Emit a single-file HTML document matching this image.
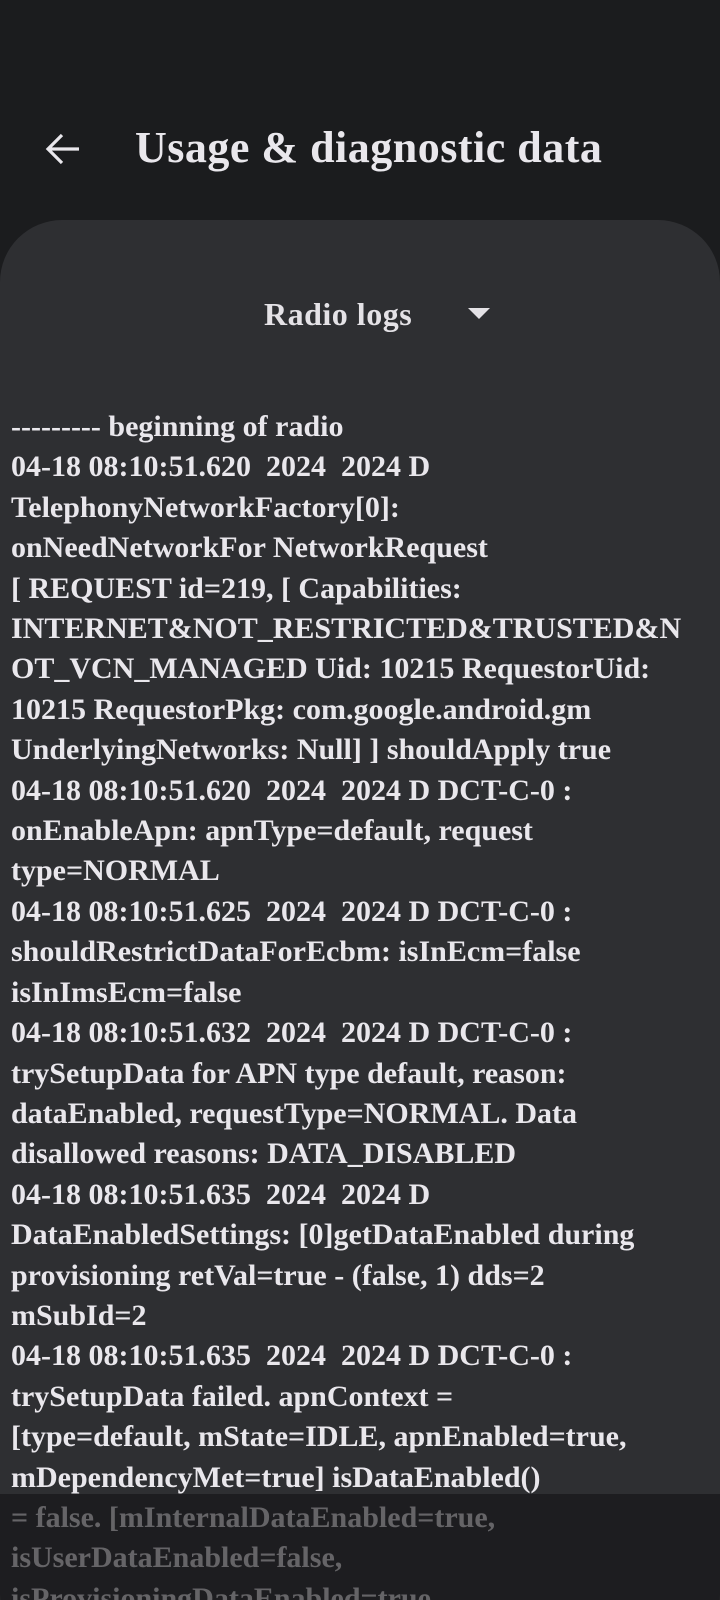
<!DOCTYPE html>
<html><head><meta charset="utf-8"><style>
html,body{margin:0;padding:0;width:720px;height:1600px;overflow:hidden;background:#1b1c1e;}
body{position:relative;font-family:"Liberation Serif","DejaVu Serif",serif;color:#e9e7ec;}
.title{position:absolute;left:135px;top:122px;font-size:44px;font-weight:bold;letter-spacing:0.5px;line-height:52px;}
.back{position:absolute;left:44px;top:130px;}
.card{position:absolute;left:0;top:220px;width:720px;height:1420px;background:#2e2f32;border-radius:62px 62px 0 0;overflow:hidden;}
.dd{position:absolute;left:264px;top:76px;font-size:32px;font-weight:bold;letter-spacing:0.5px;color:#e4e2e6;}
.tri{position:absolute;left:468px;top:88px;width:0;height:0;border-left:11px solid transparent;border-right:11px solid transparent;border-top:11px solid #e4e2e6;}
.log{position:absolute;left:11px;top:187px;font-size:30px;line-height:40.4px;font-weight:bold;letter-spacing:0px;white-space:nowrap;color:#e9e7ec;}
.ov{position:absolute;left:0;top:1494px;width:720px;height:160px;background:rgba(20,20,21,0.62);border-radius:0 0 60px 60px;}
</style></head><body>
<svg class="back" width="38" height="38" viewBox="0 0 38 38"><path d="M35 19H5M18 5L4 19L18 33" fill="none" stroke="#e9e7ec" stroke-width="3.2"/></svg>
<div class="title">Usage &amp; diagnostic data</div>
<div class="card">
<div class="dd">Radio logs</div><div class="tri"></div>
<div class="log">--------- beginning of radio<br>04-18 08:10:51.620&nbsp; 2024&nbsp; 2024 D<br>TelephonyNetworkFactory[0]:<br>onNeedNetworkFor NetworkRequest<br>[ REQUEST id=219, [ Capabilities:<br>INTERNET&amp;NOT_RESTRICTED&amp;TRUSTED&amp;N<br>OT_VCN_MANAGED Uid: 10215 RequestorUid:<br>10215 RequestorPkg: com.google.android.gm<br>UnderlyingNetworks: Null] ] shouldApply true<br>04-18 08:10:51.620&nbsp; 2024&nbsp; 2024 D DCT-C-0 :<br>onEnableApn: apnType=default, request<br>type=NORMAL<br>04-18 08:10:51.625&nbsp; 2024&nbsp; 2024 D DCT-C-0 :<br>shouldRestrictDataForEcbm: isInEcm=false<br>isInImsEcm=false<br>04-18 08:10:51.632&nbsp; 2024&nbsp; 2024 D DCT-C-0 :<br>trySetupData for APN type default, reason:<br>dataEnabled, requestType=NORMAL. Data<br>disallowed reasons: DATA_DISABLED<br>04-18 08:10:51.635&nbsp; 2024&nbsp; 2024 D<br>DataEnabledSettings: [0]getDataEnabled during<br>provisioning retVal=true - (false, 1) dds=2<br>mSubId=2<br>04-18 08:10:51.635&nbsp; 2024&nbsp; 2024 D DCT-C-0 :<br>trySetupData failed. apnContext =<br>[type=default, mState=IDLE, apnEnabled=true,<br>mDependencyMet=true] isDataEnabled()<br>= false. [mInternalDataEnabled=true,<br>isUserDataEnabled=false,<br>isProvisioningDataEnabled=true,</div>
</div>
<div class="ov"></div>
</body></html>
